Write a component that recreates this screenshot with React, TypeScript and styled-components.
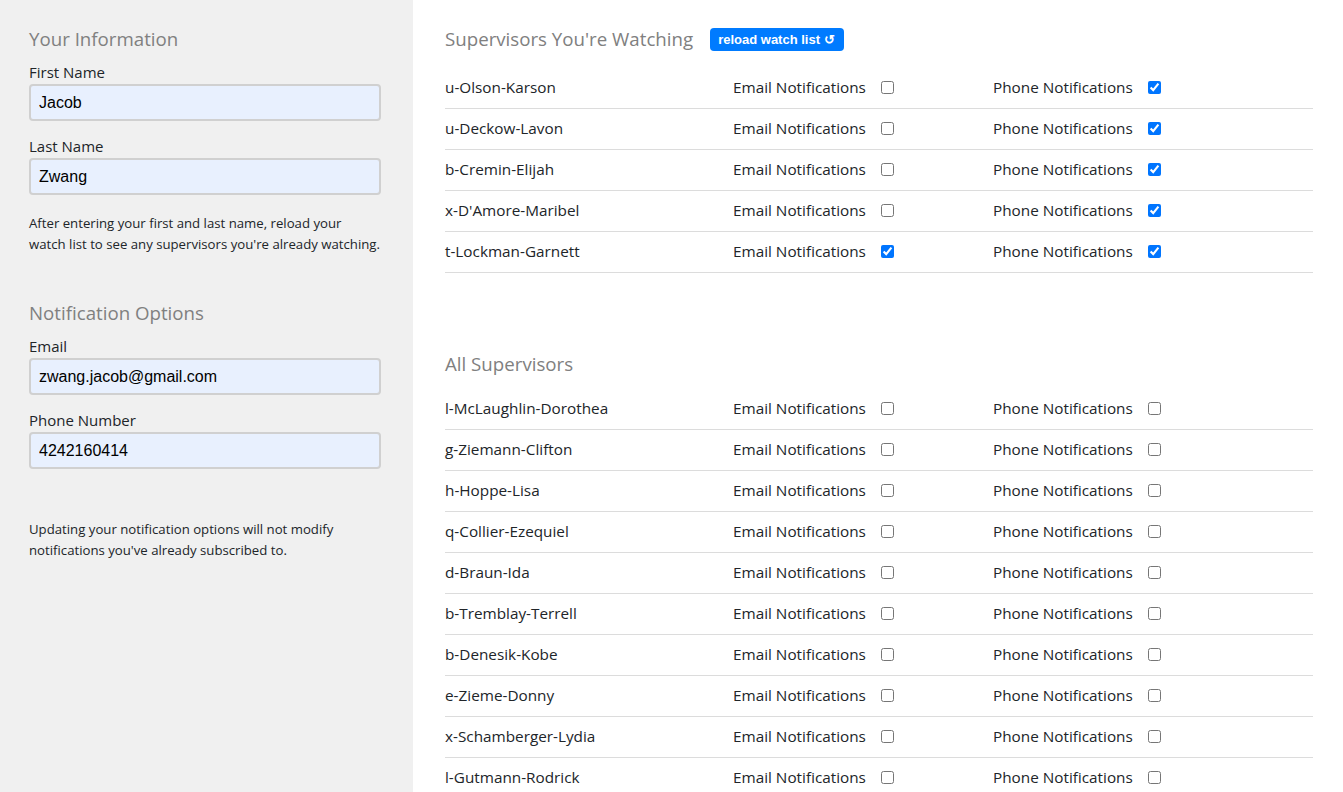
import React from "react";
import styled, { createGlobalStyle } from "styled-components";

const Global = createGlobalStyle`
  html, body { margin: 0; padding: 0; background: #fff; }
  body { font-family: "Open Sans", "Noto Sans", sans-serif; color: #212529; }
  * { box-sizing: border-box; }
`;

const Page = styled.div`
  display: flex;
  min-height: 792px;
`;

const Sidebar = styled.aside`
  width: 413px;
  flex: none;
  background: #f0f0f0;
  padding: 26px 32px 0 29px;
`;

const Main = styled.main`
  flex: 1;
  padding: 26px 30px 0 32px;
`;

const Heading = styled.h2<{ $gap?: number; $top?: number }>`
  margin: ${(p) => p.$top ?? 0}px 0 ${(p) => p.$gap ?? 9}px;
  font-size: 18.7px;
  font-weight: 400;
  line-height: 26px;
  color: #808080;
  display: flex;
  align-items: center;
  gap: 17px;
`;

const Field = styled.div`
  display: flex;
  flex-direction: column;
  margin-bottom: 14px;
`;

const Label = styled.label`
  font-size: 15px;
  line-height: 22px;
  margin-bottom: 1px;
`;

const Input = styled.input`
  width: 352px;
  height: 37px;
  border: 2px solid #d0d0d0;
  border-radius: 4px;
  background: #e8f0fe;
  padding: 0 8px;
  font-family: "Liberation Sans", Arial, sans-serif;
  font-size: 16px;
  color: #000;
  outline: none;
`;

const Help = styled.p<{ $top?: number }>`
  margin: ${(p) => p.$top ?? 0}px 0 0;
  font-size: 13.2px;
  line-height: 21px;
  color: #212529;
`;

const ReloadButton = styled.button`
  height: 23px;
  padding: 0 9px 0 8px;
  border: none;
  border-radius: 4px;
  background: #007bff;
  color: #fff;
  font-family: "Liberation Sans", Arial, sans-serif;
  font-weight: 700;
  font-size: 13px;
  display: inline-flex;
  align-items: center;
  gap: 4px;
`;

const List = styled.div`
  display: flex;
  flex-direction: column;
`;

const Row = styled.div`
  display: grid;
  grid-template-columns: 288px 260px 1fr;
  align-items: center;
  height: 41px;
  padding-bottom: 2px;
  border-bottom: 1px solid #dcdcdc;
  font-size: 15.3px;
`;

const Cell = styled.div`
  display: flex;
  align-items: center;
`;

const Check = styled.input`
  margin: 1px 0 0 15px;
  width: 13px;
  height: 13px;
`;

type Sup = { name: string; email: boolean; phone: boolean };

const watching: Sup[] = [
  { name: "u-Olson-Karson", email: false, phone: true },
  { name: "u-Deckow-Lavon", email: false, phone: true },
  { name: "b-Cremin-Elijah", email: false, phone: true },
  { name: "x-D'Amore-Maribel", email: false, phone: true },
  { name: "t-Lockman-Garnett", email: true, phone: true },
];

const all: Sup[] = [
  "l-McLaughlin-Dorothea",
  "g-Ziemann-Clifton",
  "h-Hoppe-Lisa",
  "q-Collier-Ezequiel",
  "d-Braun-Ida",
  "b-Tremblay-Terrell",
  "b-Denesik-Kobe",
  "e-Zieme-Donny",
  "x-Schamberger-Lydia",
  "l-Gutmann-Rodrick",
].map((name) => ({ name, email: false, phone: false }));

const SupRow = ({ s }: { s: Sup }) => (
  <Row>
    <Cell>{s.name}</Cell>
    <Cell>
      Email Notifications
      <Check type="checkbox" defaultChecked={s.email} />
    </Cell>
    <Cell>
      Phone Notifications
      <Check type="checkbox" defaultChecked={s.phone} />
    </Cell>
  </Row>
);

export default function App() {
  return (
    <Page>
      <Global />
      <Sidebar>
        <Heading>Your Information</Heading>
        <Field>
          <Label>First Name</Label>
          <Input defaultValue="Jacob" />
        </Field>
        <Field>
          <Label>Last Name</Label>
          <Input defaultValue="Zwang" />
        </Field>
        <Help $top={18}>
          After entering your first and last name, reload your watch list to see any supervisors you're already
          watching.
        </Help>
        <Heading $top={45}>Notification Options</Heading>
        <Field>
          <Label>Email</Label>
          <Input defaultValue="zwang.jacob@gmail.com" />
        </Field>
        <Field>
          <Label>Phone Number</Label>
          <Input defaultValue="4242160414" />
        </Field>
        <Help $top={50}>
          Updating your notification options will not modify notifications you've already subscribed to.
        </Help>
      </Sidebar>
      <Main>
        <Heading $gap={16}>
          Supervisors You're Watching
          <ReloadButton>reload watch list ↺</ReloadButton>
        </Heading>
        <List>
          {watching.map((s) => (
            <SupRow key={s.name} s={s} />
          ))}
        </List>
        <Heading $top={78} $gap={12}>
          All Supervisors
        </Heading>
        <List>
          {all.map((s) => (
            <SupRow key={s.name} s={s} />
          ))}
        </List>
      </Main>
    </Page>
  );
}
